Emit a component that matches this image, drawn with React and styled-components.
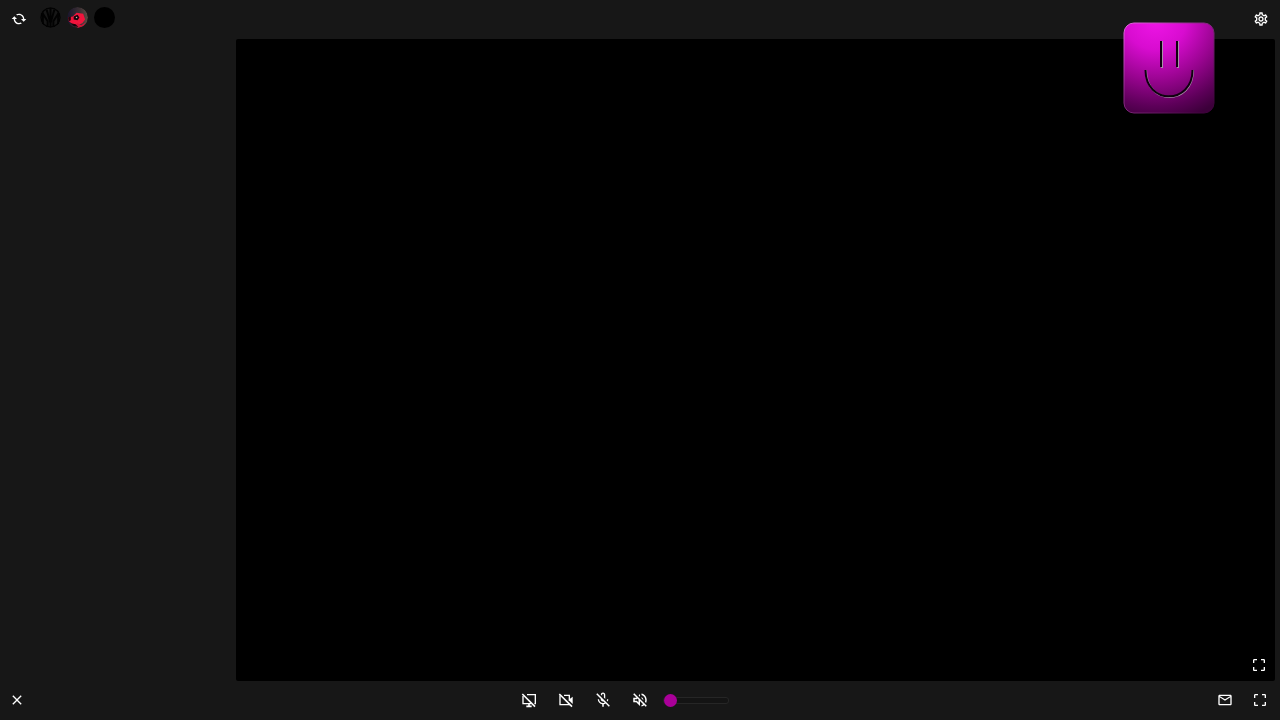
import React, { useState } from 'react'
import styled, { createGlobalStyle } from 'styled-components'
import {
  MdCached,
  MdClose,
  MdCropFree,
  MdOutlineEmail,
  MdOutlineMicOff,
  MdOutlineSettings,
  MdOutlineVolumeOff,
} from 'react-icons/md'

const users = [
  { name: 'Crest', art: <CrestAvatar /> },
  { name: 'Mask', art: <MaskAvatar /> },
  { name: 'Guest', art: null },
]

export default function App() {
  const [volume, setVolume] = useState(0)

  return (
    <Page>
      <GlobalStyle />
      <TopBar>
        <Group>
          <IconButton aria-label="Refresh" $mirror><MdCached /></IconButton>
          <Avatars>
            {users.map((user) => (
              <Avatar key={user.name} aria-label={user.name}>{user.art}</Avatar>
            ))}
          </Avatars>
        </Group>
        <IconButton aria-label="Settings"><MdOutlineSettings /></IconButton>
        <Mascot><Smiley /></Mascot>
      </TopBar>
      <Body>
        <Sidebar />
        <Stage>
          <IconButton aria-label="Expand video"><MdCropFree /></IconButton>
        </Stage>
      </Body>
      <BottomBar>
        <Group>
          <IconButton aria-label="Close"><MdClose /></IconButton>
        </Group>
        <Controls>
          <IconButton aria-label="Share screen"><ScreenOffIcon /></IconButton>
          <IconButton aria-label="Camera"><CameraOffIcon /></IconButton>
          <IconButton aria-label="Microphone" $large><MdOutlineMicOff /></IconButton>
          <IconButton aria-label="Sound" $large><MdOutlineVolumeOff /></IconButton>
          <Volume
            type="range"
            aria-label="Volume"
            min="0"
            max="100"
            value={volume}
            onChange={(e) => setVolume(Number(e.target.value))}
          />
        </Controls>
        <Group $end>
          <IconButton aria-label="Messages"><MdOutlineEmail /></IconButton>
          <IconButton aria-label="Fullscreen"><MdCropFree /></IconButton>
        </Group>
      </BottomBar>
    </Page>
  )
}

function ScreenOffIcon() {
  return (
    <svg viewBox="0 0 24 24" width="1em" height="1em" fill="none" stroke="currentColor" strokeWidth="2">
      <path d="M9 4h12.500v13.500h-1.500M3 6v11.500h12" />
      <path d="M2 3l19 19" strokeWidth="2.400" />
      <path d="M12 18v3M8 21.500h8" strokeWidth="2.400" />
    </svg>
  )
}

function CameraOffIcon() {
  return (
    <svg viewBox="0 0 24 24" width="1em" height="1em" fill="none" stroke="currentColor" strokeWidth="2">
      <path d="M9 5h8v8M3 5v14h14v-1" />
      <path d="M2 3l19 19" strokeWidth="2.400" />
      <path d="M17 11l5-4v11l-5-5z" fill="currentColor" stroke="none" />
    </svg>
  )
}

function CrestAvatar() {
  return (
    <svg viewBox="0 0 22 22" fill="none" stroke="#020202" strokeWidth="2">
      <circle cx="11" cy="11" r="10" strokeWidth="1.400" />
      <path d="M11 1v20M7 3l4 14 4-14M3 18V7l5 8v6M19 18V7l-5 8v6" />
    </svg>
  )
}

function MaskAvatar() {
  return (
    <svg viewBox="0 0 22 22">
      <defs>
        <linearGradient id="maskBack" x1="0" y1="0" x2="1" y2="0">
          <stop offset="0" stopColor="#18142c" />
          <stop offset="0.600" stopColor="#3c3034" />
          <stop offset="1" stopColor="#5c4c44" />
        </linearGradient>
      </defs>
      <circle cx="11" cy="11" r="11" fill="url(#maskBack)" />
      <path d="M1 11l5-1 4-4 7 1 2 6-3 4-5 2-5-1-4-3z" fill="#f0143c" />
      <path d="M11 17l4 2 5-3-3 4-5 2-5-3z" fill="#d01438" />
      <path d="M7 10l4-2 2 3-2 3-4-1z" fill="#14060c" />
      <path d="M1 11l3-1v4l-2 1z" fill="#20060c" />
      <path d="M4 17l5 1 3 3-5-1z" fill="#100408" />
      <circle cx="10" cy="11" r="0.800" fill="#e8a0b0" />
    </svg>
  )
}

function Smiley() {
  return (
    <svg viewBox="0 0 92 92">
      <defs>
        <radialGradient id="face" cx="0.350" cy="-0.050" r="1.150">
          <stop offset="0" stopColor="#f016e8" />
          <stop offset="0.300" stopColor="#d80cd0" />
          <stop offset="0.600" stopColor="#98048f" />
          <stop offset="0.850" stopColor="#5c0058" />
          <stop offset="1" stopColor="#3c003a" />
        </radialGradient>
        <linearGradient id="rim" x1="0" y1="0" x2="1" y2="1">
          <stop offset="0" stopColor="#e468e0" />
          <stop offset="0.400" stopColor="#8c2c88" />
          <stop offset="1" stopColor="#380036" />
        </linearGradient>
      </defs>
      <rect x="1" y="1" width="90" height="90" rx="10" fill="url(#face)" stroke="url(#rim)" />
      <g fill="none" stroke="#a890a8" strokeWidth="2">
        <path d="M39 19v27M55 19v27" />
        <path d="M23 48c0 36 47 36 47 0" />
      </g>
      <g fill="none" stroke="#100010" strokeWidth="2">
        <path d="M38 19v26M54 19v26" />
        <path d="M22.500 48c0 35 47 35 47 0" />
      </g>
    </svg>
  )
}

const GlobalStyle = createGlobalStyle`
  * {
    box-sizing: border-box;
  }
  body {
    margin: 0;
    background-color: #171717;
    font-family: Roboto, sans-serif;
  }
`

const Page = styled.div`
  min-height: 100vh;
  display: flex;
  flex-direction: column;
  background-color: #171717;
`

const TopBar = styled.header`
  position: relative;
  display: flex;
  align-items: center;
  justify-content: space-between;
  padding: 5px 5px 6px;
`

const Group = styled.div`
  display: flex;
  flex: 1;
  align-items: center;
  gap: 7px;
  justify-content: ${({ $end }) => ($end ? 'flex-end' : 'flex-start')};
`

const IconButton = styled.button`
  width: 28px;
  height: 28px;
  padding: 0;
  display: flex;
  align-items: center;
  justify-content: center;
  border: 0;
  background: none;
  color: #fff;
  font-size: ${({ $large }) => ($large ? '18px' : '16px')};
  cursor: pointer;
  svg {
    transform: ${({ $mirror }) => ($mirror ? 'scaleX(-1)' : 'none')};
  }
`

const Avatars = styled.div`
  display: flex;
  gap: 6px;
  padding-bottom: 4px;
`

const Avatar = styled.button`
  width: 21px;
  height: 21px;
  padding: 0;
  border: 0;
  border-radius: 50%;
  overflow: hidden;
  background-color: ${({ children }) => (children ? 'transparent' : '#000')};
  svg {
    display: block;
  }
`

const Mascot = styled.div`
  position: absolute;
  top: 22px;
  right: 65px;
  width: 92px;
  height: 92px;
  z-index: 10;
`

const Body = styled.main`
  flex: 1;
  display: flex;
  padding-right: 5px;
`

const Sidebar = styled.aside`
  width: 236px;
`

const Stage = styled.section`
  flex: 1;
  display: flex;
  align-items: flex-end;
  justify-content: flex-end;
  padding: 2px;
  border-radius: 2px;
  background-color: #000;
`

const BottomBar = styled.footer`
  display: flex;
  align-items: center;
  padding: 5px 6px 6px 3px;
`

const Controls = styled.div`
  display: flex;
  align-items: center;
  gap: 9px;
  padding-right: 34px;
`

const Volume = styled.input`
  appearance: none;
  width: 66px;
  height: 13px;
  margin: 0;
  background: none;
  &::-webkit-slider-runnable-track {
    height: 7px;
    border: 1px solid #262626;
    border-radius: 3px;
    background-color: #141414;
  }
  &::-webkit-slider-thumb {
    appearance: none;
    width: 13px;
    height: 13px;
    margin-top: -4px;
    border-radius: 50%;
    background-color: #aa0099;
  }
`
